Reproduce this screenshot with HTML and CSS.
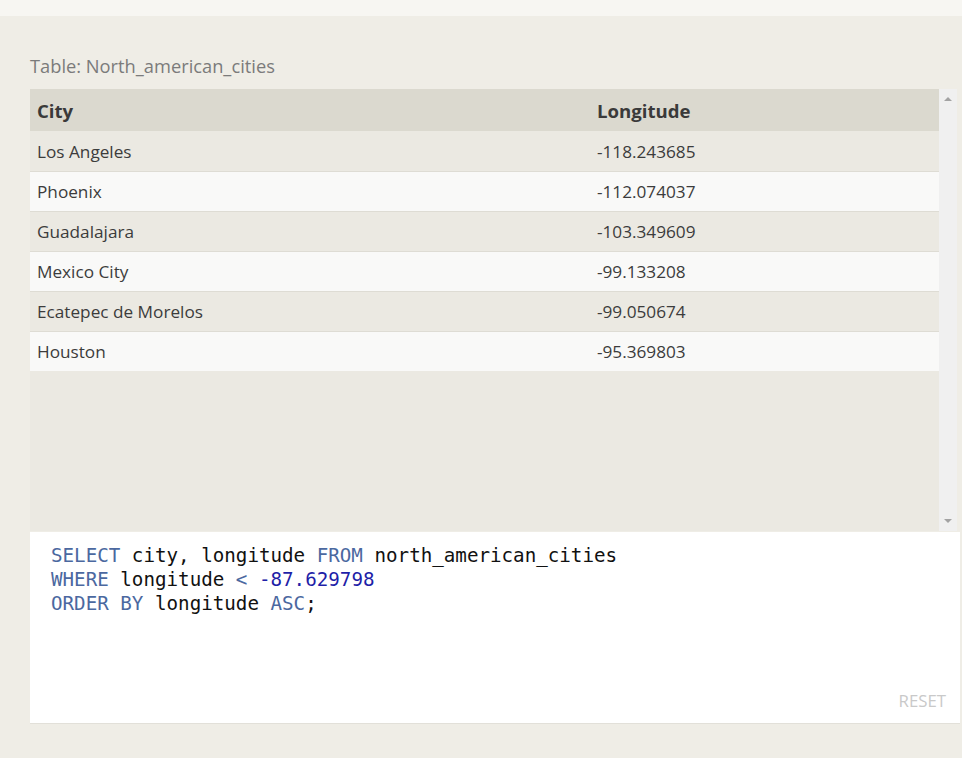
FILE: index.html
```html
<!DOCTYPE html>
<html>
<head>
<meta charset="utf-8">
<link rel="stylesheet" href="styles.css">
</head>
<body>
<div class="topbar"></div>
<div class="main">
  <div class="caption">Table: North_american_cities</div>
  <div class="table-wrap">
    <div class="table-area">
      <table class="data">
        <thead>
          <tr><th class="c1">City</th><th>Longitude</th></tr>
        </thead>
        <tbody>
          <tr><td>Los Angeles</td><td>-118.243685</td></tr>
          <tr><td>Phoenix</td><td>-112.074037</td></tr>
          <tr><td>Guadalajara</td><td>-103.349609</td></tr>
          <tr><td>Mexico City</td><td>-99.133208</td></tr>
          <tr><td>Ecatepec de Morelos</td><td>-99.050674</td></tr>
          <tr><td>Houston</td><td>-95.369803</td></tr>
        </tbody>
      </table>
    </div>
    <div class="scrollbar">
      <span class="arrow up"></span>
      <span class="arrow down"></span>
    </div>
  </div>
  <div class="editor">
    <pre class="code"><span class="kw">SELECT</span> city, longitude <span class="kw">FROM</span> north_american_cities
<span class="kw">WHERE</span> longitude <span class="kw">&lt;</span> <span class="num">-87.629798</span>
<span class="kw">ORDER BY</span> longitude <span class="kw">ASC</span>;</pre>
    <div class="reset">RESET</div>
  </div>
</div>
</body>
</html>
```

FILE: styles.css
```css
html, body {
  margin: 0;
  padding: 0;
}
body {
  background: #efede6;
  font-family: "Open Sans", "Noto Sans", sans-serif;
  width: 962px;
  height: 758px;
  overflow: hidden;
}
.topbar {
  height: 16px;
  background: #f7f6f2;
}
.main {
  padding: 0 2px 0 30px;
}
.caption {
  margin-top: 38px;
  height: 35px;
  font-size: 18.3px;
  line-height: 24px;
  color: #7b7b7b;
}
.table-wrap {
  display: flex;
  height: 442px;
}
.table-area {
  width: 909px;
  background: #ebe9e2;
}
.data {
  width: 100%;
  border-collapse: collapse;
  table-layout: fixed;
}
.data th {
  text-align: left;
  background: #dbd9cf;
  color: #3a3a3a;
  font-weight: 700;
  font-size: 18.6px;
  height: 42px;
  padding: 1px 7px 0;
  box-sizing: border-box;
}
.data th.c1 {
  width: 560px;
}
.data td {
  height: 40px;
  padding: 1px 7px 0;
  font-size: 17.2px;
  color: #3c3c3c;
  border-top: 1px solid #dedcd4;
  box-sizing: border-box;
}
.data tbody tr:nth-child(odd) td {
  background: #ebe9e2;
}
.data tbody tr:nth-child(even) td {
  background: #f9f9f8;
}
.data tbody tr:first-child td {
  border-top: none;
}
.scrollbar {
  width: 18px;
  background: #f0f0f0;
  display: flex;
  flex-direction: column;
  justify-content: space-between;
  align-items: center;
  padding: 8px 0;
  box-sizing: border-box;
}
.arrow {
  width: 0;
  height: 0;
  border-left: 4px solid transparent;
  border-right: 4px solid transparent;
}
.arrow.up {
  border-bottom: 4px solid #a3a3a3;
}
.arrow.down {
  border-top: 4px solid #a3a3a3;
}
.editor {
  height: 191px;
  background: #ffffff;
  border-bottom: 1px solid #e2e0d9;
  margin-top: 1px;
  display: flex;
  flex-direction: column;
  justify-content: space-between;
}
.code {
  margin: 12px 0 0 21px;
  font-family: "DejaVu Sans Mono", "Liberation Mono", monospace;
  font-size: 19.2px;
  line-height: 24px;
  color: #111111;
}
.kw {
  color: #4b68a0;
}
.num {
  color: #1f1fa8;
}
.reset {
  align-self: flex-end;
  margin: 0 14px 11px 0;
  font-size: 16.8px;
  color: #c9c9c9;
}
```
